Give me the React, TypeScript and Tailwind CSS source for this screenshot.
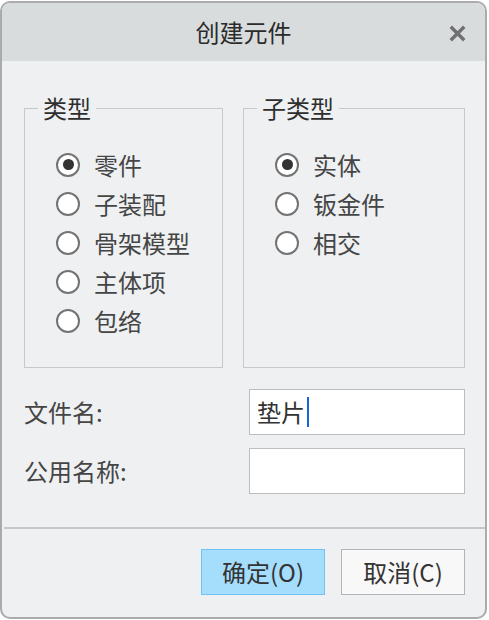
const font = { fontFamily: '"Noto Sans CJK SC", "Noto Sans", sans-serif' }

function Radio({ label, checked }: { label: string; checked?: boolean }) {
  return (
    <div className="flex h-[39px] items-center">
      <span className="flex h-[24px] w-[24px] items-center justify-center rounded-full border-2 border-[#737373] bg-white">
        {checked && <span className="h-[11px] w-[11px] rounded-full bg-[#333333]" />}
      </span>
      <span className="ml-[14px] text-[24px] leading-[26px] text-[#454545]">{label}</span>
    </div>
  )
}

function Group({ title, width, items }: { title: string; width: string; items: string[] }) {
  return (
    <fieldset className={`${width} h-[273px] border border-[#c6c8ca]`}>
      <legend className="ml-[13px] px-[5px] text-[24px] leading-[26px] text-[#2e2e2e]">{title}</legend>
      <div className="pl-[31px] pt-[24px]">
        {items.map((it, i) => (
          <Radio key={it} label={it} checked={i === 0} />
        ))}
      </div>
    </fieldset>
  )
}

export default function App() {
  return (
    <div className="h-[620px] w-[489px] bg-white pt-px" style={font}>
      <div className="flex h-[618px] w-[487px] flex-col overflow-hidden rounded-[10px] border-2 border-[#a9abad] bg-[#eef0f2]">
        <div className="relative flex h-[58px] items-center justify-center bg-[#d9dcdd]">
          <span className="text-[24px] text-[#2b2b2b]">创建元件</span>
          <svg className="absolute right-[19px] top-[22px]" width="17" height="17" viewBox="0 0 17 17">
            <path d="M3 3 L14 14 M14 3 L3 14" stroke="#707070" strokeWidth="3.5" strokeLinecap="square" />
          </svg>
        </div>

        <div className="mt-[34px] flex gap-[20px] pl-[22px]">
          <Group title="类型" width="w-[199px]" items={['零件', '子装配', '骨架模型', '主体项', '包络']} />
          <Group title="子类型" width="w-[222px]" items={['实体', '钣金件', '相交']} />
        </div>

        <div className="mt-[21px] flex flex-col gap-[13px] pl-[22px]">
          <div className="flex items-center">
            <span className="w-[225px] text-[24px] text-[#454545]">文件名:</span>
            <div className="flex h-[46px] w-[216px] items-center border border-[#bdbdbd] bg-white pl-[7px]">
              <span className="text-[24px] text-[#333333]">垫片</span>
              <span className="ml-[2px] h-[30px] w-[2px] bg-[#1565d8]" />
            </div>
          </div>
          <div className="flex items-center">
            <span className="w-[225px] text-[24px] text-[#454545]">公用名称:</span>
            <div className="h-[46px] w-[216px] border border-[#bdbdbd] bg-white" />
          </div>
        </div>

        <div className="ml-[2px] mt-[33px] h-[2px] bg-[#c6c7c8]" />

        <div className="mt-[20px] flex justify-end gap-[16px] pr-[20px]">
          <button className="h-[46px] w-[124px] border border-[#6fc3f2] bg-[#a5ddfd] text-[24px] text-[#333333]">
            确定(O)
          </button>
          <button className="h-[46px] w-[124px] border border-[#b4b4b4] bg-[#f8f8f8] text-[24px] text-[#333333]">
            取消(C)
          </button>
        </div>
      </div>
    </div>
  )
}
